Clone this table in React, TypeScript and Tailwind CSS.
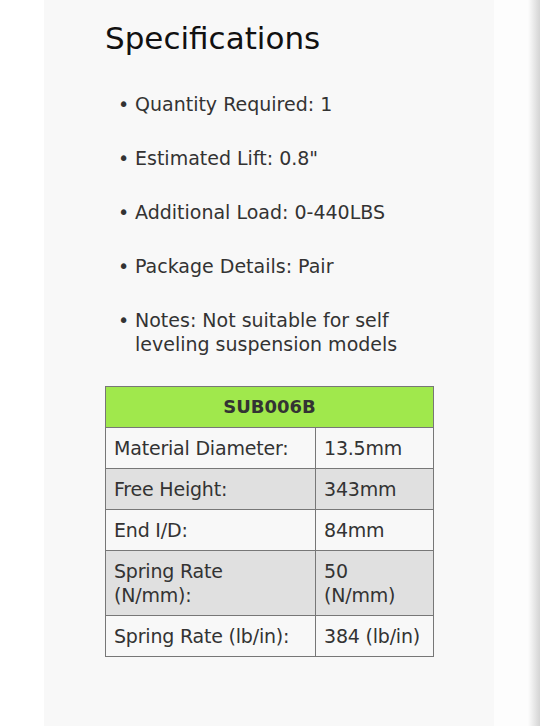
import React from 'react';

const specs = [
  'Quantity Required: 1',
  'Estimated Lift: 0.8"',
  'Additional Load: 0-440LBS',
  'Package Details: Pair',
  'Notes: Not suitable for self leveling suspension models',
];

const rows: [string[], string[]][] = [
  [['Material Diameter:'], ['13.5mm']],
  [['Free Height:'], ['343mm']],
  [['End I/D:'], ['84mm']],
  [['Spring Rate', '(N/mm):'], ['50', '(N/mm)']],
  [['Spring Rate (lb/in):'], ['384 (lb/in)']],
];

const App: React.FC = () => {
  return (
    <div className="flex h-[726px] w-[540px] overflow-hidden bg-white font-['DejaVu_Sans',sans-serif] text-[#333]">
      <div className="w-[44px] shrink-0" />
      <div className="w-[450px] shrink-0 bg-[#f8f8f8] pl-[61px] pt-[18px]">
        <h2 className="text-[31px] leading-[40px] font-normal text-[#111]">Specifications</h2>

        <ul className="mt-[34px] text-[19px] leading-[24px]">
          {specs.map((s) => (
            <li key={s} className="mb-[30px] flex w-[300px]">
              <span className="w-[30px] shrink-0 pl-[13px]">•</span>
              <span>{s}</span>
            </li>
          ))}
        </ul>

        <table className="w-[329px] table-fixed border-collapse text-[19px] leading-[24px]">
          <colgroup>
            <col className="w-[210px]" />
            <col />
          </colgroup>
          <thead>
            <tr>
              <th colSpan={2} className="h-[41px] border border-[#777] bg-[#a0e84c] text-[18px] font-bold text-[#333]">
                SUB006B
              </th>
            </tr>
          </thead>
          <tbody>
            {rows.map(([k, v], i) => (
              <tr key={k.join()} className={i % 2 === 1 ? 'bg-[#e0e0e0]' : 'bg-[#f8f8f8]'}>
                <td className="border border-[#777] px-[8px] py-[8px] align-top whitespace-nowrap tracking-[-0.2px]">
                  {k.map((line) => (
                    <div key={line}>{line}</div>
                  ))}
                </td>
                <td className="border border-[#777] px-[8px] py-[8px] align-top whitespace-nowrap tracking-[-0.2px]">
                  {v.map((line) => (
                    <div key={line}>{line}</div>
                  ))}
                </td>
              </tr>
            ))}
          </tbody>
        </table>
      </div>
      <div className="w-[34px] shrink-0 bg-[#fdfdfd]" />
      <div className="w-[12px] shrink-0 bg-gradient-to-r from-[#fdfdfd] to-[#d4d4d4]" />
    </div>
  );
};

export default App;
